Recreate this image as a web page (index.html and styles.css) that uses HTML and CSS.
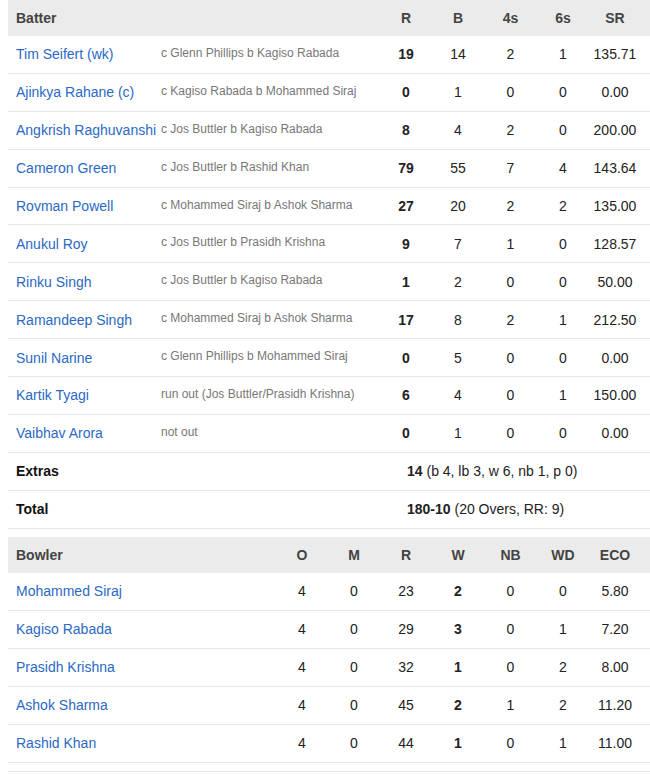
FILE: index.html
```html
<!DOCTYPE html>
<html>
<head>
<meta charset="utf-8">
<link rel="stylesheet" href="styles.css">
</head>
<body>
<div class="page">
  <table class="card bat">
    <colgroup>
      <col class="c-name"><col class="c-dis"><col class="c-num"><col class="c-num"><col class="c-num4"><col class="c-num"><col class="c-last">
    </colgroup>
    <thead>
      <tr><th class="l">Batter</th><th></th><th>R</th><th>B</th><th>4s</th><th>6s</th><th class="last">SR</th></tr>
    </thead>
    <tbody>
      <tr><td class="name">Tim Seifert (wk)</td><td class="dis">c Glenn Phillips b Kagiso Rabada</td><td class="b">19</td><td>14</td><td>2</td><td>1</td><td class="last">135.71</td></tr>
      <tr><td class="name">Ajinkya Rahane (c)</td><td class="dis">c Kagiso Rabada b Mohammed Siraj</td><td class="b">0</td><td>1</td><td>0</td><td>0</td><td class="last">0.00</td></tr>
      <tr><td class="name">Angkrish Raghuvanshi</td><td class="dis">c Jos Buttler b Kagiso Rabada</td><td class="b">8</td><td>4</td><td>2</td><td>0</td><td class="last">200.00</td></tr>
      <tr><td class="name">Cameron Green</td><td class="dis">c Jos Buttler b Rashid Khan</td><td class="b">79</td><td>55</td><td>7</td><td>4</td><td class="last">143.64</td></tr>
      <tr><td class="name">Rovman Powell</td><td class="dis">c Mohammed Siraj b Ashok Sharma</td><td class="b">27</td><td>20</td><td>2</td><td>2</td><td class="last">135.00</td></tr>
      <tr><td class="name">Anukul Roy</td><td class="dis">c Jos Buttler b Prasidh Krishna</td><td class="b">9</td><td>7</td><td>1</td><td>0</td><td class="last">128.57</td></tr>
      <tr><td class="name">Rinku Singh</td><td class="dis">c Jos Buttler b Kagiso Rabada</td><td class="b">1</td><td>2</td><td>0</td><td>0</td><td class="last">50.00</td></tr>
      <tr><td class="name">Ramandeep Singh</td><td class="dis">c Mohammed Siraj b Ashok Sharma</td><td class="b">17</td><td>8</td><td>2</td><td>1</td><td class="last">212.50</td></tr>
      <tr><td class="name">Sunil Narine</td><td class="dis">c Glenn Phillips b Mohammed Siraj</td><td class="b">0</td><td>5</td><td>0</td><td>0</td><td class="last">0.00</td></tr>
      <tr><td class="name">Kartik Tyagi</td><td class="dis">run out (Jos Buttler/Prasidh Krishna)</td><td class="b">6</td><td>4</td><td>0</td><td>1</td><td class="last">150.00</td></tr>
      <tr><td class="name">Vaibhav Arora</td><td class="dis">not out</td><td class="b">0</td><td>1</td><td>0</td><td>0</td><td class="last">0.00</td></tr>
      <tr><td class="sum">Extras</td><td></td><td colspan="5" class="span"><b>14</b> (b 4, lb 3, w 6, nb 1, p 0)</td></tr>
      <tr><td class="sum">Total</td><td></td><td colspan="5" class="span"><b>180-10</b> (20 Overs, RR: 9)</td></tr>
    </tbody>
  </table>

  <table class="card bowl">
    <colgroup>
      <col class="c-bname"><col class="c-num"><col class="c-num"><col class="c-num"><col class="c-num"><col class="c-num4"><col class="c-num"><col class="c-last">
    </colgroup>
    <thead>
      <tr><th class="l">Bowler</th><th>O</th><th>M</th><th>R</th><th>W</th><th>NB</th><th>WD</th><th class="last">ECO</th></tr>
    </thead>
    <tbody>
      <tr><td class="name">Mohammed Siraj</td><td>4</td><td>0</td><td>23</td><td class="b">2</td><td>0</td><td>0</td><td class="last">5.80</td></tr>
      <tr><td class="name">Kagiso Rabada</td><td>4</td><td>0</td><td>29</td><td class="b">3</td><td>0</td><td>1</td><td class="last">7.20</td></tr>
      <tr><td class="name">Prasidh Krishna</td><td>4</td><td>0</td><td>32</td><td class="b">1</td><td>0</td><td>2</td><td class="last">8.00</td></tr>
      <tr><td class="name">Ashok Sharma</td><td>4</td><td>0</td><td>45</td><td class="b">2</td><td>1</td><td>2</td><td class="last">11.20</td></tr>
      <tr><td class="name">Rashid Khan</td><td>4</td><td>0</td><td>44</td><td class="b">1</td><td>0</td><td>1</td><td class="last">11.00</td></tr>
    </tbody>
  </table>
  <div class="next"></div>
</div>
</body>
</html>
```

FILE: styles.css
```css
html, body {
  margin: 0;
  padding: 0;
  background: #ffffff;
}
.page {
  padding: 0 0 0 8px;
  font-family: "Liberation Sans", Arial, sans-serif;
  font-size: 14px;
  color: #222222;
}
.card {
  width: 642px;
  table-layout: fixed;
  border-collapse: collapse;
  margin-bottom: 8px;
}
.c-name { width: 149px; }
.c-dis { width: 223px; }
.c-bname { width: 268px; }
.c-num { width: 52px; }
.c-num4 { width: 53px; }
.c-last { width: 61px; }
th {
  background: #ebebeb;
  height: 36px;
  padding: 0;
  font-weight: bold;
  color: #444444;
  text-align: center;
}
th.l {
  text-align: left;
  padding-left: 8px;
}
td {
  height: 37px;
  padding: 0;
  text-align: center;
  border-bottom: 1px solid #e6e6e6;
  white-space: nowrap;
  overflow: hidden;
}
.bat td {
  height: 36.9px;
}
th.last, td.last {
  padding-right: 9px;
}
td.name {
  text-align: left;
  padding-left: 8px;
  color: #2a69c4;
}
.bat td.dis {
  text-align: left;
  padding-left: 4px;
  font-size: 12px;
  color: #777777;
  vertical-align: top;
  padding-top: 10px;
  height: 26.9px;
}
td.b { font-weight: bold; }
td.sum {
  text-align: left;
  padding-left: 8px;
  font-weight: bold;
  color: #111111;
}
td.span {
  text-align: left;
  padding-left: 27px;
}
.next {
  width: 642px;
  height: 6px;
  margin-top: 3px;
  border-top: 1px solid #e6e6e6;
}
```
